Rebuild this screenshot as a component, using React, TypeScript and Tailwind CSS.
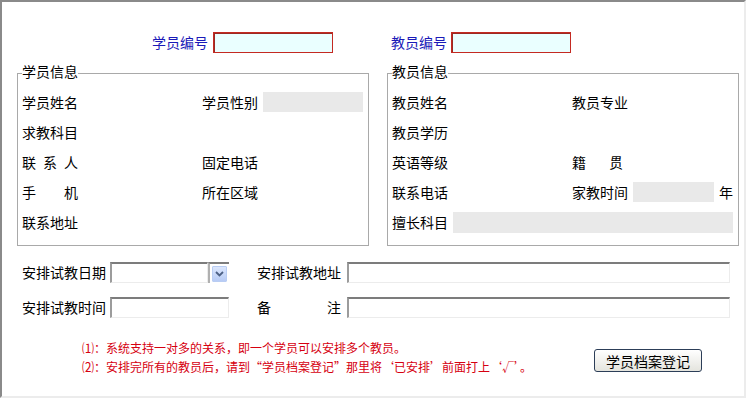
import type { ReactNode } from 'react';

const font = { fontFamily: '"Noto Sans CJK SC", "Liberation Sans", sans-serif' };

function Row({ children }: { children: ReactNode }) {
  return <div className="grid h-[30px] grid-cols-[180px_1fr] items-center">{children}</div>;
}

function GrayBox({ className }: { className: string }) {
  return <div className={`bg-[#e9e9e9] ${className}`} />;
}

function InsetInput({ className }: { className: string }) {
  return (
    <div
      className={`h-[21px] border-t-2 border-l-2 border-r border-b border-t-[#7c7c7c] border-l-[#9c9c9c] border-r-[#ececec] border-b-[#ececec] bg-white ${className}`}
    />
  );
}

function Panel({ title, children }: { title: string; children: ReactNode }) {
  return (
    <fieldset className="w-[352px] border border-[#a9a9a9] px-[4px] pt-[6px] pb-[8px]">
      <legend className="relative -top-[2px] px-0 leading-[16px] text-black">{title}</legend>
      {children}
    </fieldset>
  );
}

export default function App() {
  return (
    <div className="h-[400px] w-[750px] bg-white text-[14px] text-black" style={font}>
      <div className="h-[398px] w-[746px] border-2 border-t-[#8a8a8a] border-l-[#8a8a8a] border-r-[#ececec] border-b-[#ececec] bg-white">
        {/* 编号 */}
        <div className="flex pt-[30px]">
          <div className="ml-[150px] flex items-center gap-[5px]">
            <span className="leading-[21px] text-[#1a1ab8]">学员编号</span>
            <div className="h-[21px] w-[120px] border border-[#c42a22] bg-[#eaffff] shadow-[inset_1px_1px_0_#9a2a24]" />
          </div>
          <div className="ml-[58px] flex items-center gap-[4px]">
            <span className="leading-[21px] text-[#1a1ab8]">教员编号</span>
            <div className="h-[21px] w-[120px] border border-[#c42a22] bg-[#eaffff] shadow-[inset_1px_1px_0_#9a2a24]" />
          </div>
        </div>

        {/* 信息 */}
        <div className="mt-[12px] flex gap-[18px] pl-[15px]">
          <Panel title="学员信息">
            <Row>
              <span>学员姓名</span>
              <div className="flex items-center gap-[5px]">
                <span>学员性别</span>
                <GrayBox className="h-[20px] w-[100px]" />
              </div>
            </Row>
            <Row>
              <span>求教科目</span>
              <span />
            </Row>
            <Row>
              <span className="flex gap-[7px]">
                <span>联</span>
                <span>系</span>
                <span>人</span>
              </span>
              <span>固定电话</span>
            </Row>
            <Row>
              <span className="flex w-[56px] justify-between">
                <span>手</span>
                <span>机</span>
              </span>
              <span>所在区域</span>
            </Row>
            <Row>
              <span>联系地址</span>
              <span />
            </Row>
          </Panel>

          <Panel title="教员信息">
            <Row>
              <span>教员姓名</span>
              <span>教员专业</span>
            </Row>
            <Row>
              <span>教员学历</span>
              <span />
            </Row>
            <Row>
              <span>英语等级</span>
              <span className="flex w-[51px] justify-between">
                <span>籍</span>
                <span>贯</span>
              </span>
            </Row>
            <Row>
              <span>联系电话</span>
              <div className="flex items-center gap-[5px]">
                <span>家教时间</span>
                <GrayBox className="h-[20px] w-[81px]" />
                <span>年</span>
              </div>
            </Row>
            <div className="flex h-[30px] items-center gap-[5px]">
              <span>擅长科目</span>
              <GrayBox className="h-[21px] w-[280px]" />
            </div>
          </Panel>
        </div>

        {/* 安排 */}
        <div className="mt-[16px] flex flex-col gap-[14px] pl-[20px]">
          <div className="flex items-center">
            <span className="w-[88px]">安排试教日期</span>
            <InsetInput className="w-[98px]" />
            <div className="flex h-[21px] w-[21px] items-center justify-center border-t-2 border-l-2 border-t-[#7c7c7c] border-l-[#b0b0b0] bg-white">
              <div className="flex h-[16px] w-[15px] items-center justify-center rounded-[1px] border border-[#b9cdf3] bg-linear-to-b from-[#dce7fd] to-[#b7cbf5]">
                <svg width="9" height="6" viewBox="0 0 9 6">
                  <path d="M1 1 L4.5 4.5 L8 1" fill="none" stroke="#4d6185" strokeWidth="1.8" />
                </svg>
              </div>
            </div>
            <span className="ml-[28px] w-[90px]">安排试教地址</span>
            <InsetInput className="w-[383px]" />
          </div>
          <div className="flex items-center">
            <span className="w-[88px]">安排试教时间</span>
            <InsetInput className="w-[119px]" />
            <span className="ml-[28px] flex w-[84px] justify-between">
              <span>备</span>
              <span>注</span>
            </span>
            <InsetInput className="ml-[6px] w-[383px]" />
          </div>
        </div>

        {/* 说明 */}
        <div className="mt-[20px] flex items-start pl-[80px]">
          <div className="w-[512px] text-[12px] leading-[19px] text-[#d60010]">
            <p>⑴：系统支持一对多的关系，即一个学员可以安排多个教员。</p>
            <p>⑵：安排完所有的教员后，请到“学员档案登记”那里将‘已安排’前面打上‘√’。</p>
          </div>
          <button
            type="button"
            className="mt-[11px] h-[23px] w-[108px] rounded-[3px] border border-[#2c3e58] bg-linear-to-b from-white to-[#e4e4de] text-[14px] leading-[20px] text-black"
          >
            学员档案登记
          </button>
        </div>
      </div>
    </div>
  );
}
